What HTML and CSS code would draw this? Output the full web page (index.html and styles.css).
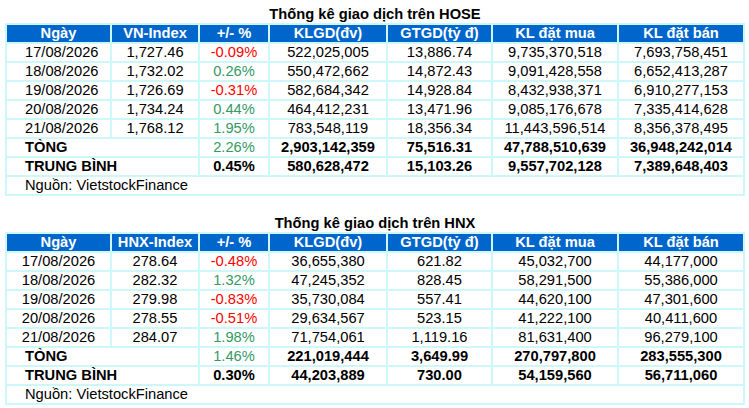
FILE: index.html
```html
<!DOCTYPE html>
<html lang="vi">
<head>
<meta charset="utf-8">
<title>Thống kê giao dịch</title>
<link rel="stylesheet" href="styles.css">
</head>
<body>
<div class="page">
  <section class="block">
    <div class="title">Thống kê giao dịch trên HOSE</div>
    <table class="stats hose">
      <colgroup>
        <col class="c1"><col class="c2"><col class="c3"><col class="c4"><col class="c5"><col class="c6"><col class="c7">
      </colgroup>
      <thead>
        <tr><th>Ngày</th><th>VN-Index</th><th>+/- %</th><th>KLGD(đv)</th><th>GTGD(tỷ đ)</th><th>KL đặt mua</th><th>KL đặt bán</th></tr>
      </thead>
      <tbody>
        <tr><td class="date">17/08/2026</td><td>1,727.46</td><td class="neg">-0.09%</td><td>522,025,005</td><td>13,886.74</td><td>9,735,370,518</td><td>7,693,758,451</td></tr>
        <tr><td class="date">18/08/2026</td><td>1,732.02</td><td class="pos">0.26%</td><td>550,472,662</td><td>14,872.43</td><td>9,091,428,558</td><td>6,652,413,287</td></tr>
        <tr><td class="date">19/08/2026</td><td>1,726.69</td><td class="neg">-0.31%</td><td>582,684,342</td><td>14,928.84</td><td>8,432,938,371</td><td>6,910,277,153</td></tr>
        <tr><td class="date">20/08/2026</td><td>1,734.24</td><td class="pos">0.44%</td><td>464,412,231</td><td>13,471.96</td><td>9,085,176,678</td><td>7,335,414,628</td></tr>
        <tr><td class="date">21/08/2026</td><td>1,768.12</td><td class="pos">1.95%</td><td>783,548,119</td><td>18,356.34</td><td>11,443,596,514</td><td>8,356,378,495</td></tr>
        <tr class="sum"><td colspan="2" class="label">TÒNG</td><td class="pos plain">2.26%</td><td>2,903,142,359</td><td>75,516.31</td><td>47,788,510,639</td><td>36,948,242,014</td></tr>
        <tr class="sum"><td colspan="2" class="label">TRUNG BÌNH</td><td>0.45%</td><td>580,628,472</td><td>15,103.26</td><td>9,557,702,128</td><td>7,389,648,403</td></tr>
        <tr><td colspan="7" class="source">Nguồn: VietstockFinance</td></tr>
      </tbody>
    </table>
  </section>

  <section class="block second">
    <div class="title">Thống kê giao dịch trên HNX</div>
    <table class="stats">
      <colgroup>
        <col class="c1"><col class="c2"><col class="c3"><col class="c4"><col class="c5"><col class="c6"><col class="c7">
      </colgroup>
      <thead>
        <tr><th>Ngày</th><th>HNX-Index</th><th>+/- %</th><th>KLGD(đv)</th><th>GTGD(tỷ đ)</th><th>KL đặt mua</th><th>KL đặt bán</th></tr>
      </thead>
      <tbody>
        <tr><td>17/08/2026</td><td>278.64</td><td class="neg">-0.48%</td><td>36,655,380</td><td>621.82</td><td>45,032,700</td><td>44,177,000</td></tr>
        <tr><td>18/08/2026</td><td>282.32</td><td class="pos">1.32%</td><td>47,245,352</td><td>828.45</td><td>58,291,500</td><td>55,386,000</td></tr>
        <tr><td>19/08/2026</td><td>279.98</td><td class="neg">-0.83%</td><td>35,730,084</td><td>557.41</td><td>44,620,100</td><td>47,301,600</td></tr>
        <tr><td>20/08/2026</td><td>278.55</td><td class="neg">-0.51%</td><td>29,634,567</td><td>523.15</td><td>41,222,100</td><td>40,411,600</td></tr>
        <tr><td>21/08/2026</td><td>284.07</td><td class="pos">1.98%</td><td>71,754,061</td><td>1,119.16</td><td>81,631,400</td><td>96,279,100</td></tr>
        <tr class="sum"><td colspan="2" class="label">TÒNG</td><td class="pos plain">1.46%</td><td>221,019,444</td><td>3,649.99</td><td>270,797,800</td><td>283,555,300</td></tr>
        <tr class="sum"><td colspan="2" class="label">TRUNG BÌNH</td><td>0.30%</td><td>44,203,889</td><td>730.00</td><td>54,159,560</td><td>56,711,060</td></tr>
        <tr><td colspan="7" class="source">Nguồn: VietstockFinance</td></tr>
      </tbody>
    </table>
  </section>
</div>
</body>
</html>
```

FILE: styles.css
```css
html, body {
  margin: 0;
  padding: 0;
  background: #ffffff;
}

body {
  font-family: "Liberation Sans", Arial, sans-serif;
  font-size: 14.7px;
  color: #000000;
}

.page {
  width: 740px;
  padding: 6px 0 0 5px;
}

.block.second {
  margin-top: 19px;
}

.title {
  font-weight: bold;
  text-align: center;
  line-height: 17px;
  height: 17px;
}

.stats {
  width: 740px;
  table-layout: fixed;
  border-collapse: separate;
  border-spacing: 2px;
  background: #ccf8fc;
}

.stats .c1 { width: 103px; }
.stats .c2 { width: 86px; }
.stats .c3 { width: 68px; }
.stats .c4 { width: 116px; }
.stats .c5 { width: 103px; }
.stats .c6 { width: 124px; }
.stats .c7 { width: 124px; }

.stats th,
.stats td {
  padding: 0;
  height: 17px;
  line-height: 17px;
  text-align: center;
  white-space: nowrap;
  overflow: hidden;
}

.stats th {
  background: #0066cc;
  color: #ffffff;
  font-weight: bold;
}

.stats td {
  background: #ffffff;
}

.stats.hose td.date {
  text-align: left;
  padding-left: 18px;
}

.stats .neg { color: #ff0000; }
.stats .pos { color: #339966; }

.stats .sum td {
  font-weight: bold;
}

.stats .sum td.plain {
  font-weight: normal;
}

.stats td.label {
  text-align: left;
  padding-left: 18px;
}

.stats td.source {
  text-align: left;
  padding-left: 18px;
}
```
